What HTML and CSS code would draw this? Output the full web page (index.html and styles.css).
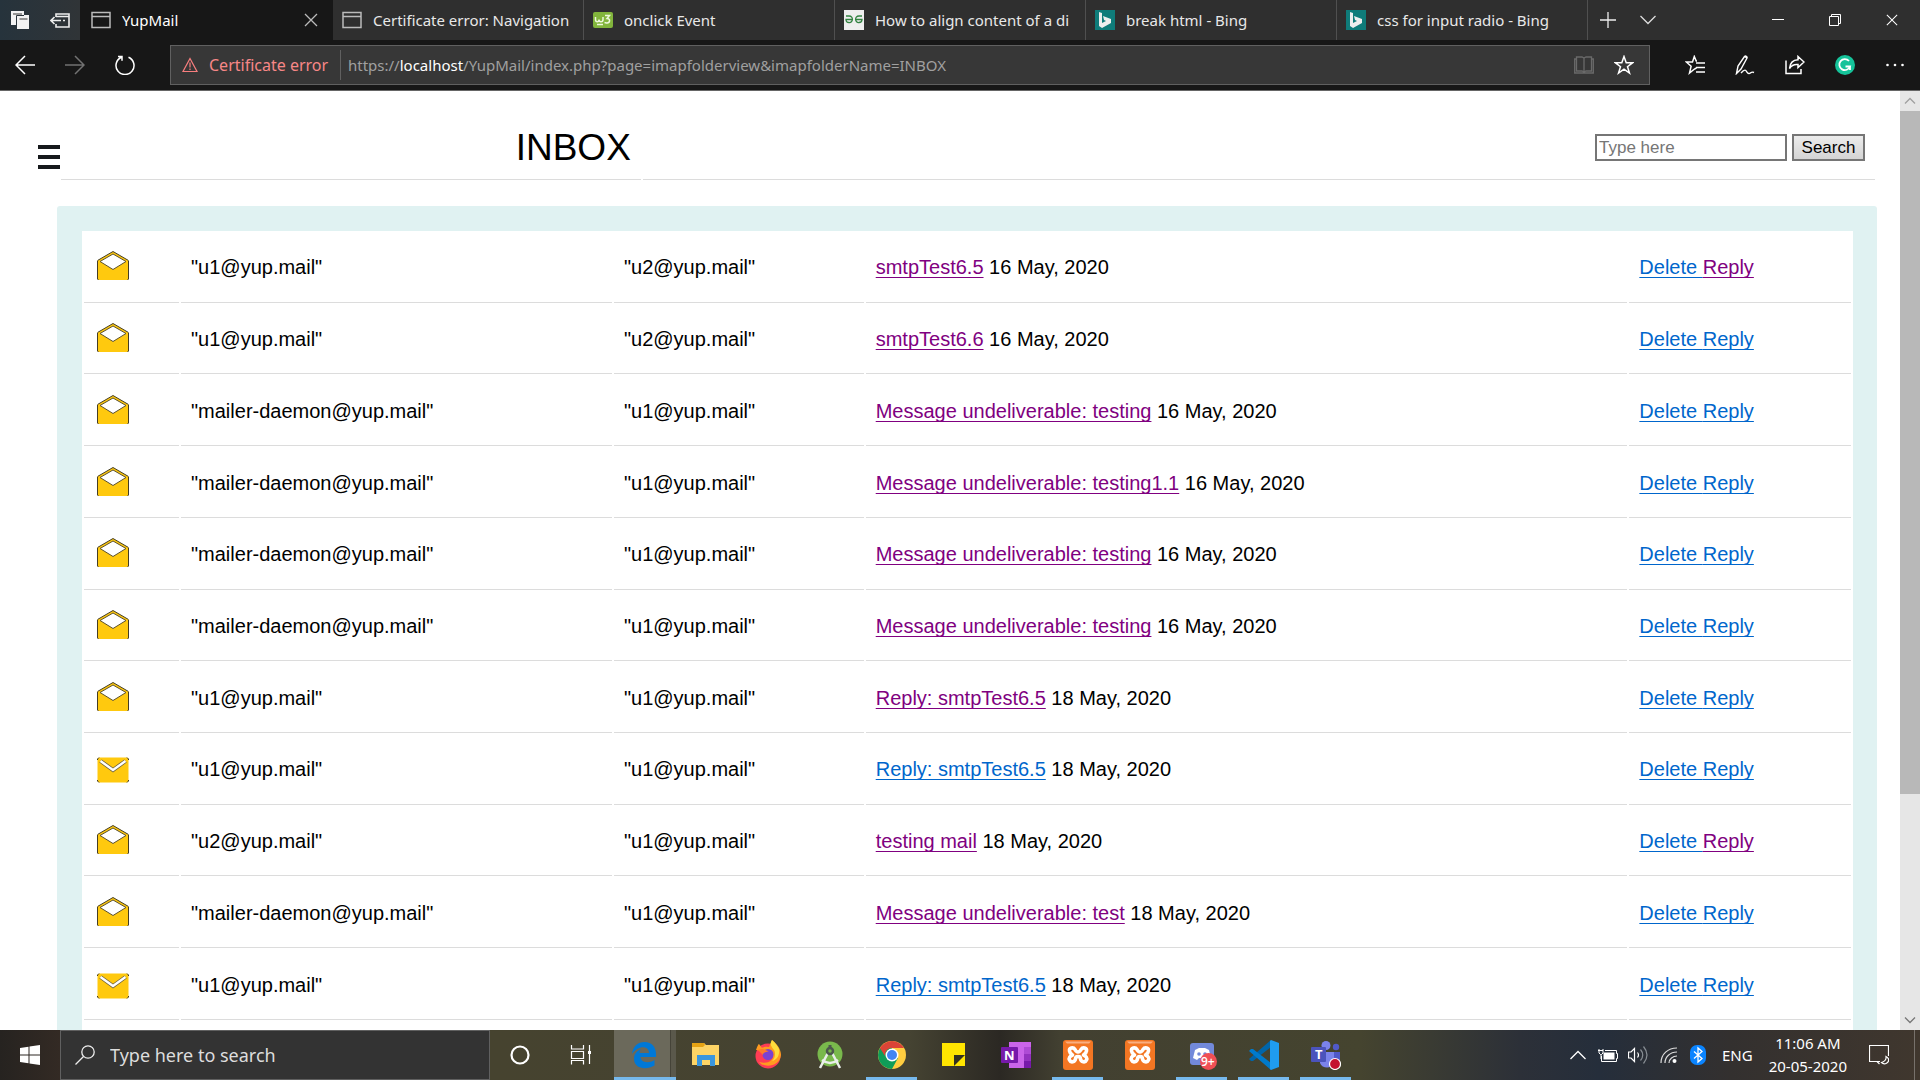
FILE: index.html
```html
<!DOCTYPE html>
<html lang="en">
<head>
<meta charset="utf-8">
<title>YupMail</title>
<link rel="stylesheet" href="styles.css">
</head>
<body>
<svg class="defs" aria-hidden="true">
  <symbol id="page" viewBox="0 0 20 20"><path d="M1 2.500h18v15H1zM1 6.500h18" fill="none" stroke="currentColor" stroke-width="1.500"/></symbol>
  <symbol id="close" viewBox="0 0 14 14"><path d="M1 1l12 12M13 1L1 13" fill="none" stroke="currentColor" stroke-width="1.300"/></symbol>
  <symbol id="bing" viewBox="0 0 20 20"><path d="M0 0h20v20H0z" fill="#0f7c7a"/><path d="M4 2l3 1v10l4-2-2-1-1-4 8 3v4l-9 5-3-2z" fill="#eee"/></symbol>
  <symbol id="opened" viewBox="0 0 32 32"><path d="M.5 9.500L16 .5l15.500 9V28l-1 1h-29l-1-1z" fill="#ffc90e"/><path d="M31.500 10v18l-1 1M.5 10v18l1 1M.5 9.500L16 .5l15.500 9" fill="none" stroke="#443d25"/><path d="M3 10.500L16 3l13 7.500L16 18.500z" fill="#fff" stroke="#5c5230"/></symbol>
  <symbol id="unread" viewBox="0 0 32 32"><rect x=".5" y="4.500" width="31" height="25" rx="2" fill="#ffc90e"/><path d="M3.500 8l12.500 9 12.500-9" fill="none" stroke="#6b6140" stroke-width="4"/><path d="M3.500 8l12.500 9 12.500-9" fill="none" stroke="#fff" stroke-width="2.400"/><path d="M.5 7V6L2 4.500M30 4.500L31.500 6v1M.5 27v1L2 29.500M30 29.500l1.500-1.500v-1" fill="none" stroke="#443d25"/></symbol>
  <symbol id="xampp" viewBox="0 0 30 30"><rect width="30" height="30" rx="3" fill="#f37623"/><path d="M2 1.500h26l-2 2H4z" fill="#f9ae80"/><path d="M12 9.500c-2-3-6-1.500-5.500 1.500.2 2 1.500 3 3 4-2.500 1-4 3-3 5 1.300 3 5.500 2 6-1 0-2 1-2.500 2.500-2.500s2.500.5 2.500 2.500c.5 3 4.700 4 6 1 1-2-.5-4-3-5 1.500-1 2.800-2 3-4 .5-3-3.500-4.500-5.500-1.500-1 2-1.500 2.500-3 2.500s-2-.5-3-2.500z" fill="none" stroke="#fff" stroke-width="3.600" stroke-linejoin="round"/></symbol>
</svg>

<div class="tabs">
  <div class="tab-tools">
    <button aria-label="Tabs set aside"><svg width="20" height="20" viewBox="0 0 20 20"><path d="M1 1h13v4h5v14H7v-4H1z" fill="#f3f3f3"/><path d="M3 4h9M9.500 9h8" stroke="#777" stroke-width="1.500"/><path d="M6.500 15V5.500H14" fill="none" stroke="#2b343b"/></svg></button>
    <button aria-label="Set tabs aside"><svg width="20" height="20" viewBox="0 0 20 20"><path d="M6 7V4h13v13H6v-3M6 6.500h13M1 10.500h10M4.500 7L1 10.500 4.500 14M13 10.500h2" fill="none" stroke="#eee" stroke-width="1.600"/></svg></button>
  </div>
  <div class="tab active"><svg width="20" height="20"><use href="#page"/></svg><span>YupMail</span><button aria-label="Close tab"><svg width="14" height="14"><use href="#close"/></svg></button></div>
  <div class="tab"><svg width="20" height="20"><use href="#page"/></svg><span>Certificate error: Navigation</span></div>
  <div class="tab"><svg width="20" height="20" viewBox="0 0 20 20"><rect y="2" width="20" height="16" rx="2" fill="#82b53c"/><path d="M2.500 7v2.500c0 3 3.500 3 3.500 0 0 3 4 3 4 0V7M12 5.500h4.500L14 8.500c4 0 3 5-.5 4.500l-2-.5M4 14.500h6" fill="none" stroke="#eef8dc" stroke-width="1.500"/></svg><span>onclick Event</span></div>
  <div class="tab"><svg width="20" height="20" viewBox="0 0 20 20"><path d="M0 0h20v20H0z" fill="#eee"/><path d="M2 6h3c5 0 4 7 0 6.500-2 0-3-1-3-3h7M18 6h-3c-5 0-4 7 0 6.500 2 0 3-1 3-3h-7" fill="none" stroke="#328241" stroke-width="1.300"/></svg><span>How to align content of a di</span></div>
  <div class="tab"><svg width="20" height="20"><use href="#bing"/></svg><span>break html - Bing</span></div>
  <div class="tab"><svg width="20" height="20"><use href="#bing"/></svg><span>css for input radio - Bing</span></div>
  <button class="new-tab" aria-label="New tab"><svg width="18" height="18" viewBox="0 0 18 18"><path d="M9 1v16M1 9h16" stroke="#eee" stroke-width="1.300"/></svg></button>
  <button class="new-tab" aria-label="Tab previews"><svg width="16" height="10" viewBox="0 0 16 10"><path d="M.5 1L8 8.500 15.500 1" fill="none" stroke="#ddd" stroke-width="1.300"/></svg></button>
  <div class="window-controls">
    <button aria-label="Minimize"><svg width="12" height="12" viewBox="0 0 12 12"><path d="M0 5.500h12" stroke="#fff"/></svg></button>
    <button aria-label="Restore"><svg width="12" height="12" viewBox="0 0 12 12"><path d="M.5 2.500h9v9h-9zM2.500 2.500v-2h9v9h-2" fill="none" stroke="#fff"/></svg></button>
    <button aria-label="Close"><svg width="12" height="12" viewBox="0 0 14 14"><path d="M1 1l12 12M13 1L1 13" stroke="#fff" stroke-width="1.200"/></svg></button>
  </div>
</div>

<div class="toolbar">
  <button aria-label="Back"><svg width="20" height="20" viewBox="0 0 20 20"><path d="M20 10H1M10 1l-9 9 9 9" fill="none" stroke="#fff" stroke-width="1.500"/></svg></button>
  <button aria-label="Forward"><svg width="20" height="20" viewBox="0 0 20 20"><path d="M0 10h19M10 1l9 9-9 9" fill="none" stroke="#727272" stroke-width="1.500"/></svg></button>
  <button aria-label="Refresh"><svg width="20" height="20" viewBox="0 0 20 20"><path d="M13.500 2.200a9 9 0 1 1-7 0M3 1.500h4v4.300" fill="none" stroke="#fff" stroke-width="1.500"/></svg></button>
  <div class="address">
    <span class="cert"><svg width="16" height="16" viewBox="0 0 16 16"><path d="M8 1.500L15 14.500H1zM8 5.500v5M8 11.500v1.500" fill="none" stroke="#f87e7e" stroke-width="1.200"/></svg>Certificate error</span>
    <span class="url">https://<b>localhost</b>/YupMail/index.php?page=imapfolderview&amp;imapfolderName=INBOX</span>
    <button aria-label="Reading view"><svg width="20" height="20" viewBox="0 0 20 20"><path d="M2.500 2H8l2 1 2-1h5.500v14H12l-2 1-2-1H2.500zM10 3v14M2.500 4H.7v14h18.600V4h-1.800" fill="none" stroke="#6a6a6a" stroke-width="1.300"/></svg></button>
    <button aria-label="Add to favorites"><svg width="20" height="20" viewBox="0 0 20 20"><path d="M10 1.500l2.200 6.200h6.500l-5.200 4 2 6.400L10 14.200l-5.500 3.900 2-6.400-5.200-4h6.500z" fill="none" stroke="#fff" stroke-width="1.500"/></svg></button>
  </div>
  <button aria-label="Favorites"><svg width="20" height="20" viewBox="0 0 20 20"><path d="M12 6h-.8L9.300 1.500 7.500 7H1.300l4.800 4.300L4.500 18l5-4M11 8h9M11 12.500h9M11 17h9M9.500 14l2-1" fill="none" stroke="#fff" stroke-width="1.500"/></svg></button>
  <button aria-label="Add notes"><svg width="20" height="20" viewBox="0 0 20 20"><path d="M1.500 18.500L3 11 9.500 1.500c1-1 3 0 2.500 1.500L6 14zM9.500 1.500L12 3M6 18c6-7 5 1 8 .5 2 0 2-2.500 5-1" fill="none" stroke="#fff" stroke-width="1.400"/></svg></button>
  <button aria-label="Share"><svg width="20" height="20" viewBox="0 0 20 20"><path d="M1 5.500v13h15V14M13 1.500L19 7l-6 5.500V9.500C8 9 6 11 4.500 13.500 5 8 8 5 13 4.800z" fill="none" stroke="#fff" stroke-width="1.500"/></svg></button>
  <button aria-label="Grammarly"><svg width="20" height="20" viewBox="0 0 20 20"><circle cx="10" cy="10" r="10" fill="#15c39a"/><path d="M14 6a5.500 5.500 0 1 0 1 5.500H10.500M15 11.500V15" fill="none" stroke="#fff" stroke-width="1.800"/></svg></button>
  <button aria-label="Settings and more"><svg width="20" height="20" viewBox="0 0 20 20" fill="#fff"><circle cx="2.500" cy="10" r="1.300"/><circle cx="10" cy="10" r="1.300"/><circle cx="17.500" cy="10" r="1.300"/></svg></button>
</div>

<div class="viewport">
  <main>
    <header class="mail-header">
      <button class="menu" aria-label="Menu"><i></i><i></i><i></i></button>
      <h1>INBOX</h1>
      <form class="search">
        <input type="text" placeholder="Type here" aria-label="Search mail">
        <button type="button">Search</button>
      </form>
    </header>
    <section class="panel">
      <div class="sheet">
      <table>
        <colgroup><col class="c-icon"><col class="c-from"><col class="c-to"><col class="c-subject"><col class="c-actions"></colgroup>
        <tbody>
          <tr><td><svg><use href="#opened"/></svg></td><td>"u1@yup.mail"</td><td>"u2@yup.mail"</td><td><a class="seen" href="#">smtpTest6.5</a> 16 May, 2020</td><td><a href="#">Delete </a><a class="seen" href="#">Reply</a></td></tr>
          <tr><td><svg><use href="#opened"/></svg></td><td>"u1@yup.mail"</td><td>"u2@yup.mail"</td><td><a class="seen" href="#">smtpTest6.6</a> 16 May, 2020</td><td><a href="#">Delete </a><a href="#">Reply</a></td></tr>
          <tr><td><svg><use href="#opened"/></svg></td><td>"mailer-daemon@yup.mail"</td><td>"u1@yup.mail"</td><td><a class="seen" href="#">Message undeliverable: testing</a> 16 May, 2020</td><td><a href="#">Delete </a><a href="#">Reply</a></td></tr>
          <tr><td><svg><use href="#opened"/></svg></td><td>"mailer-daemon@yup.mail"</td><td>"u1@yup.mail"</td><td><a class="seen" href="#">Message undeliverable: testing1.1</a> 16 May, 2020</td><td><a href="#">Delete </a><a href="#">Reply</a></td></tr>
          <tr><td><svg><use href="#opened"/></svg></td><td>"mailer-daemon@yup.mail"</td><td>"u1@yup.mail"</td><td><a class="seen" href="#">Message undeliverable: testing</a> 16 May, 2020</td><td><a href="#">Delete </a><a href="#">Reply</a></td></tr>
          <tr><td><svg><use href="#opened"/></svg></td><td>"mailer-daemon@yup.mail"</td><td>"u1@yup.mail"</td><td><a class="seen" href="#">Message undeliverable: testing</a> 16 May, 2020</td><td><a href="#">Delete </a><a href="#">Reply</a></td></tr>
          <tr><td><svg><use href="#opened"/></svg></td><td>"u1@yup.mail"</td><td>"u1@yup.mail"</td><td><a class="seen" href="#">Reply: smtpTest6.5</a> 18 May, 2020</td><td><a href="#">Delete </a><a href="#">Reply</a></td></tr>
          <tr><td><svg><use href="#unread"/></svg></td><td>"u1@yup.mail"</td><td>"u1@yup.mail"</td><td><a href="#">Reply: smtpTest6.5</a> 18 May, 2020</td><td><a href="#">Delete </a><a href="#">Reply</a></td></tr>
          <tr><td><svg><use href="#opened"/></svg></td><td>"u2@yup.mail"</td><td>"u1@yup.mail"</td><td><a class="seen" href="#">testing mail</a> 18 May, 2020</td><td><a href="#">Delete </a><a class="seen" href="#">Reply</a></td></tr>
          <tr><td><svg><use href="#opened"/></svg></td><td>"mailer-daemon@yup.mail"</td><td>"u1@yup.mail"</td><td><a class="seen" href="#">Message undeliverable: test</a> 18 May, 2020</td><td><a href="#">Delete </a><a href="#">Reply</a></td></tr>
          <tr><td><svg><use href="#unread"/></svg></td><td>"u1@yup.mail"</td><td>"u1@yup.mail"</td><td><a href="#">Reply: smtpTest6.5</a> 18 May, 2020</td><td><a href="#">Delete </a><a href="#">Reply</a></td></tr>
        </tbody>
      </table>
      </div>
    </section>
  </main>
  <div class="scrollbar">
    <svg width="20" height="20" viewBox="0 0 20 20"><path d="M5 12.500l5-5 5 5" fill="none" stroke="#a0a0a0" stroke-width="1.300"/></svg>
    <div class="track"><div class="thumb"></div></div>
    <svg width="20" height="20" viewBox="0 0 20 20"><path d="M5 7.500l5 5 5-5" fill="none" stroke="#777" stroke-width="1.300"/></svg>
  </div>
</div>

<footer class="taskbar">
  <button class="start" aria-label="Start"><svg width="20" height="20" viewBox="0 0 20 20"><path d="M0 3l8.500-1.200v7.700H0zM9.500 1.600L20 0v9.500H9.500zM0 10.500h8.500v7.700L0 17zM9.500 10.500H20V20L9.500 18.400z" fill="#fff"/></svg></button>
  <label class="task-search"><svg width="20" height="20" viewBox="0 0 20 20"><circle cx="13" cy="7" r="6.200" fill="none" stroke="#eee" stroke-width="1.300"/><path d="M8.500 11.500L.5 19.500" stroke="#eee" stroke-width="1.300"/></svg><input type="text" placeholder="Type here to search" aria-label="Type here to search"></label>
  <div class="apps">
    <button aria-label="Cortana"><svg viewBox="0 0 30 30"><circle cx="15" cy="15" r="8.500" fill="none" stroke="#fff" stroke-width="2.200"/></svg></button>
    <button aria-label="Task View"><svg viewBox="0 0 30 30"><path d="M4.500 5v4h12V5M4.500 24.500v-4h12v4M4.500 11.500h12v7h-12zM22.500 5v19" fill="none" stroke="#fff" stroke-width="1.200"/><path d="M21 11h3v3h-3z" fill="#fff"/></svg></button>
    <button class="open current" aria-label="Edge"><svg viewBox="0 0 30 30"><path d="M3 14C4 6 9 2 15.500 2 23 2 27 7.500 27 14v3H11.500c.5 6 8.500 6.500 14 3v5.500C18 30 5 29.500 5 18.500c0-5 3.500-8 7-9.500-1 1-1.500 2.500-1.500 4H20c0-7-10-8.500-17 1z" fill="#0078d7"/></svg></button>
    <button aria-label="File Explorer"><svg viewBox="0 0 30 30"><path d="M1 3h12l2 2h13v20H1z" fill="#fdd465"/><path d="M1 3h12l1 2-2 2H1z" fill="#e6a314"/><path d="M6 26V15h18v11h-5v-6h-8v6z" fill="#3a96dd"/></svg></button>
    <button aria-label="Firefox"><svg viewBox="0 0 30 30"><circle cx="15" cy="16" r="12.500" fill="#ff3c55"/><path d="M3 10c2-6 3-6 3-6l3 4c3-2 6-1 7-1l3-7c5 4 9 9 9 15-1 11-16 14-22 7 10 3 15-3 14-7-3-5-9-4-17-5z" fill="#ff9b20"/><path d="M19 0c-3 5 0 7 2 10s1 9-2 11c5-1 8-6 7-12-1-2-3-6-7-9z" fill="#ffdc3c"/><circle cx="15" cy="14.500" r="5.500" fill="#7b42d0"/><path d="M5 10c6-3 7 1 11 1-2 1-6 1-6 4z" fill="#ff7b28"/></svg></button>
    <button aria-label="Android Studio"><svg viewBox="0 0 30 30"><circle cx="15" cy="14" r="12.500" fill="#79b94c"/><path d="M15 9L5 28M15 9l10 19M7 20q8 6 16 0" fill="none" stroke="#e9eeea" stroke-width="2.500"/><circle cx="15" cy="11" r="3" fill="#76b549" stroke="#4c584d" stroke-width="2.500"/><path d="M15 5v3" stroke="#4c584d" stroke-width="3"/></svg></button>
    <button class="open" aria-label="Chrome"><svg viewBox="0 0 30 30"><circle cx="15" cy="15" r="14" fill="#ffcd40"/><path d="M2.900 8A14 14 0 0 0 15 29l6-11-6-3z" fill="#0f9d58"/><path d="M3 8h12v8l-6 2z" fill="#0f9d58"/><path d="M2.900 8A14 14 0 0 1 27.100 8H15c-5 0-7 4-7 8z" fill="#db4437"/><circle cx="15" cy="15" r="6.500" fill="#fff"/><circle cx="15" cy="15" r="5" fill="#4285f4"/></svg></button>
    <button aria-label="Sticky Notes"><svg viewBox="0 0 30 30"><path d="M3 3h23v23H3z" fill="#ffe500"/><path d="M26 15L15 26V15z" fill="#33311f"/></svg></button>
    <button aria-label="OneNote"><svg viewBox="0 0 30 30"><path d="M8 2h22v26H8z" fill="#ca64ea"/><path d="M23 7h7v7h-7z" fill="#ae4bd5"/><path d="M23 14h7v7h-7z" fill="#9332bf"/><path d="M23 21h7v7h-7z" fill="#7719aa"/><rect y="7" width="17" height="16" rx="1" fill="#7719aa"/><text x="3" y="20" class="glyph">N</text></svg></button>
    <button class="open" aria-label="XAMPP"><svg><use href="#xampp"/></svg></button>
    <button aria-label="XAMPP Control Panel"><svg><use href="#xampp"/></svg></button>
    <button class="open" aria-label="Discord"><svg viewBox="0 0 30 30"><rect x="3" y="3" width="24" height="22" rx="3" fill="#7289da"/><path d="M6 18l2-8 4-2h6l4 2 2 8-4 2-2-2h-6l-2 2z" fill="#fff"/><circle cx="12" cy="14" r="1.800" fill="#7289da"/><circle cx="18" cy="14" r="1.800" fill="#7289da"/><circle cx="21.500" cy="21.500" r="8.500" fill="#f04f55"/><text x="14" y="26" class="badge">9+</text></svg></button>
    <button class="open" aria-label="Visual Studio Code"><svg viewBox="0 0 30 30"><path d="M22 0L0 19l2 2h2l18-14z" fill="#0065a9"/><path d="M22 30L0 11l2-2h2l18 14z" fill="#007acc"/><path d="M22 0l8 3v24l-8 3-1-1V1z" fill="#1f9cf0"/></svg></button>
    <button class="open" aria-label="Teams"><svg viewBox="0 0 30 30"><circle cx="15" cy="5.500" r="4.500" fill="#7b83eb"/><circle cx="25" cy="7" r="3.200" fill="#5059c9"/><path d="M18 12h11v9l-4 5h-7z" fill="#5059c9"/><path d="M9 12h14v11c-2 6-12 6-14 0z" fill="#7b83eb"/><rect y="7" width="15" height="15" rx="1" fill="#4b53bc"/><text x="4" y="19" class="glyph">T</text><circle cx="24" cy="24" r="5.500" fill="#c4122f" stroke="#fff" stroke-width="1.200"/></svg></button>
  </div>
  <div class="tray">
    <button aria-label="Show hidden icons"><svg width="16" height="10" viewBox="0 0 16 10"><path d="M.5 9L8 1.500 15.500 9" fill="none" stroke="#fff" stroke-width="1.300"/></svg></button>
    <button aria-label="Battery"><svg width="20" height="20" viewBox="0 0 20 20"><path d="M5.500 7.500h11v7h-11z" fill="#fff"/><path d="M7 5.500h11.500v3h1v5h-1v3h-15V11M1 4v4l1.500 1.500h1L5 8V4M0 5.500h5M3 9.500V14" fill="none" stroke="#fff"/></svg></button>
    <button aria-label="Volume"><svg width="20" height="20" viewBox="0 0 20 20"><path d="M.5 7v6H3l3.500 3.500v-13L3 7zM9.500 7.500q2 2.500 0 5" fill="none" stroke="#fff" stroke-width="1.200"/><path d="M12.500 4.500q4.500 5.500 0 11M15.500 1.500q7 8.500 0 17" fill="none" stroke="#888e94" stroke-width="1.200"/></svg></button>
    <button aria-label="Network"><svg width="18" height="18" viewBox="0 0 18 18"><path d="M1 17C1 8 8 2 17 2M5 17c0-6 5-11 12-11M9 17c0-4 4-7 8-7" fill="none" stroke="#ddd" stroke-width="1.200"/><circle cx="14.500" cy="15" r="2" fill="#fff"/></svg></button>
    <button aria-label="Bluetooth"><svg width="16" height="20" viewBox="0 0 16 20"><rect width="16" height="20" rx="7" fill="#0a84ff"/><path d="M4 6.500l8 7-4 3.500V3l4 3.500-8 7" fill="none" stroke="#fff" stroke-width="1.300"/></svg></button>
    <button class="lang">ENG</button>
    <button class="clock">11:06 AM<br>20-05-2020</button>
    <button class="notes" aria-label="Notifications"><svg width="20" height="20" viewBox="0 0 20 20"><path d="M11 16.500H8l2.500 2.500M19.500 11V.5H.5v16H8" fill="none" stroke="#fff" stroke-width="1.200"/><path d="M17 11.500c.5 3-1 5-4.500 6 3 3 8 0 7-3.500-.5-1.500-1.500-2-2.500-2.500z" fill="none" stroke="#fff" stroke-width="1.200"/></svg></button>
  </div>
</footer>
</body>
</html>
```
FILE: styles.css
```css
* { box-sizing: border-box; }
body {
  margin: 0;
  height: 100vh;
  display: flex;
  flex-direction: column;
  overflow: hidden;
  background: #fff;
  color: #000;
  font-family: "Noto Sans", "Open Sans", sans-serif;
  font-size: 15px;
}
button { border: 0; padding: 0; background: none; color: inherit; font: inherit; }
svg { display: block; flex: none; }
.defs { display: none; }

/* Browser tabs */
.tabs { display: flex; flex: none; height: 40px; background: #2f2f2f; color: #e8e8e8; }
.tab-tools { display: flex; align-items: center; justify-content: space-between; width: 80px; padding: 0 10px; background: linear-gradient(90deg, #26333c, #303437); }
.tab { display: flex; align-items: center; gap: 11px; width: 251px; padding: 0 9px; border-right: 1px solid #505050; color: #e8e8e8; }
.tab svg { color: #bbb; }
.tab span { flex: 1; min-width: 0; overflow: hidden; white-space: nowrap; }
.tab.active { width: 253px; padding: 0 15px 0 11px; background: #171717; border: 0; color: #fff; }
.new-tab { display: flex; align-items: center; justify-content: center; width: 40px; }
.window-controls { display: flex; margin-left: auto; }
.window-controls button { display: flex; align-items: center; justify-content: center; width: 57px; }

/* Navigation bar */
.toolbar { display: flex; flex: none; align-items: center; height: 51px; border-bottom: 1px solid #666; background: #171717; }
.toolbar > button { display: flex; justify-content: center; width: 50px; }
.address { display: flex; flex: 1; align-items: center; gap: 20px; height: 40px; margin: 0 20px; padding-right: 15px; border: 1px solid #606060; background: #373737; color: #a0a0a0; }
.cert { display: flex; align-items: center; gap: 11px; height: 30px; width: 170px; padding-left: 11px; border-right: 1px solid #606060; color: #f88787; font-size: 16px; }
.url { flex: 1; margin-left: -13px; white-space: nowrap; overflow: hidden; }
.url b { color: #fff; font-weight: 400; }

/* Mail page */
.viewport { display: flex; flex: 1; min-height: 0; font-family: "Liberation Sans", Arial, sans-serif; font-size: 20px; }
main { display: flex; flex: 1; flex-direction: column; min-width: 0; overflow: hidden; }
.mail-header { display: grid; grid-template-columns: 21px 32fr 68fr; column-gap: 2px; height: 89px; margin: 0 25px 26px 38px; }
.menu { display: flex; flex-direction: column; align-self: end; gap: 6px; padding-bottom: 11px; }
.menu i { width: 22px; height: 4px; background: #16191c; }
h1 { display: flex; align-items: end; justify-content: end; margin: 0; padding: 0 10px 9px; border-bottom: 1px solid #dcdcdc; font-size: 37px; font-weight: 400; line-height: 44px; }
.search { display: flex; align-items: end; justify-content: end; gap: 5px; padding: 0 10px 18px; border-bottom: 1px solid #dcdcdc; }
.search input, .search button { height: 27px; border: 2px solid #767676; font-family: inherit; font-size: 17px; line-height: 20px; }
.search input { width: 192px; padding: 0 2px; }
.search input::placeholder { color: #767676; }
.search button { width: 73px; background: linear-gradient(#ececec, #d4d4d4); }
.panel { display: flex; flex: 1; margin: 0 23px 0 57px; padding: 25px 24px 0 25px; border-radius: 3px 3px 0 0; background: #e0f2f2; }
.sheet { flex: 1; background: #fff; }
table { width: 100%; height: 791px; table-layout: fixed; border-spacing: 2px; }
.c-icon { width: 5.4%; }
.c-from { width: 24.5%; }
.c-to { width: 14.2%; }
.c-subject { width: 43.3%; }
.c-actions { width: 12.6%; }
td { padding: 10px; border-bottom: 1px solid #dcdcdc; line-height: 24px; vertical-align: middle; }
td:first-child { padding-left: 13px; }
td svg { width: 32px; height: 32px; }
td a { color: #06c; text-decoration-thickness: 1px; text-underline-offset: 3px; text-decoration-skip-ink: none; }
td a.seen { color: #800080; }

.scrollbar { display: flex; flex-direction: column; width: 20px; background: #e6e6e6; }
.track { flex: 1; }
.thumb { height: 76%; background: #b8b8b8; }

/* Windows taskbar */
.taskbar { display: flex; flex: none; height: 50px; background: linear-gradient(90deg, #262320 0, #332a24 60px, #46432f 490px, #454332 910px, #2b2823 1000px, #424031 1060px, #45442f 1360px, #2c3038 1520px, #252e3b 1600px, #33302f 1730px, #40372e 1920px); color: #fff; }
.start { display: flex; align-items: center; justify-content: center; width: 60px; }
.task-search { display: flex; align-items: center; gap: 15px; width: 430px; padding: 0 14px; border: 1px solid #606060; background: #333; }
.task-search input { flex: 1; min-width: 0; padding: 0; border: 0; background: none; color: #ddd; font: inherit; font-size: 18px; }
.task-search input::placeholder { color: #ddd; }
.apps { display: flex; }
.apps button { display: flex; align-items: center; justify-content: center; width: 51px; margin: 0 7px 0 4px; border-bottom: 3px solid transparent; padding-top: 3px; }
.apps svg { width: 30px; height: 30px; }
.apps .open { border-color: #76b9ed; }
.apps .current { width: 62px; margin: 0; padding-right: 3px; background: linear-gradient(90deg, #6b695b 56px, #454338 56px, #454338 57px, #5a584b 57px); }
.glyph { fill: #fff; font: 700 13px "Open Sans", sans-serif; }
.badge { fill: #fff; font: 600 12px "Open Sans", sans-serif; }
.tray { display: flex; align-items: center; gap: 12px; margin-left: auto; padding-right: 5px; }
.tray button:nth-child(2) { margin-right: -2px; }
.lang { margin-left: 4px; }
.clock { margin-left: 4px; line-height: 23px; }
.notes { height: 50px; margin-left: 10px; padding-right: 25px; border-right: 1px solid #77716b; }
```
